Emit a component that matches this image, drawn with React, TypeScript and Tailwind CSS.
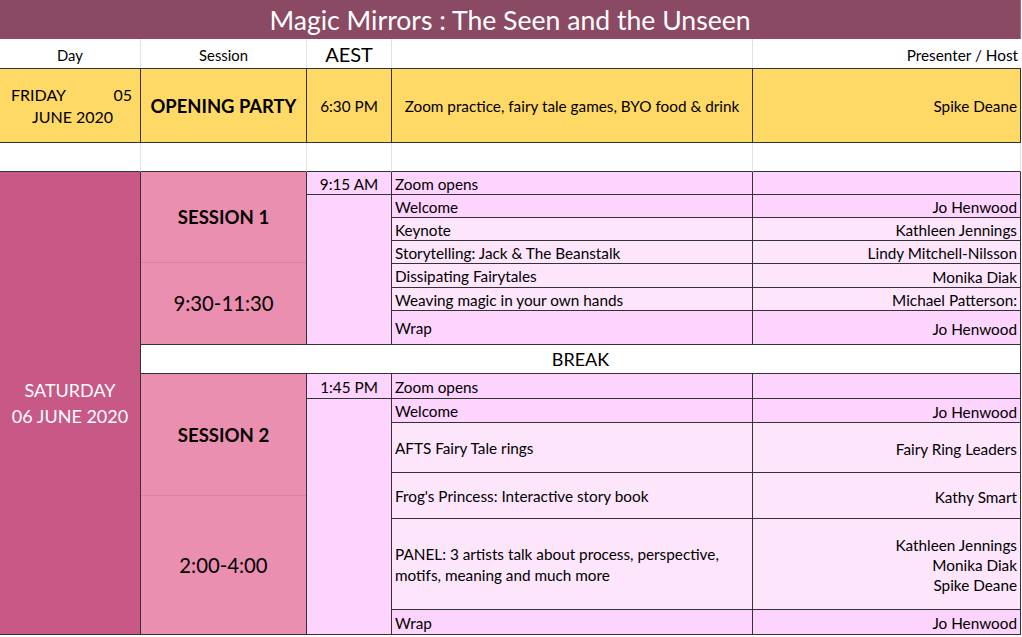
import React from "react";

const dark = "border-[#333]";
const light = "border-[#e2e2e2]";

type Item = { title: React.ReactNode; who: React.ReactNode; tone: "deep" | "soft" };

const session1: Item[] = [
  { title: "Zoom opens", who: "", tone: "deep" },
  { title: "Welcome", who: "Jo Henwood", tone: "deep" },
  { title: "Keynote", who: "Kathleen Jennings", tone: "soft" },
  { title: "Storytelling: Jack & The Beanstalk", who: "Lindy Mitchell-Nilsson", tone: "soft" },
  { title: "Dissipating Fairytales", who: "Monika Diak", tone: "soft" },
  { title: "Weaving magic in your own hands", who: "Michael Patterson:", tone: "soft" },
  { title: "Wrap", who: "Jo Henwood", tone: "deep" },
];

const session2: Item[] = [
  { title: "Zoom opens", who: "", tone: "deep" },
  { title: "Welcome", who: "Jo Henwood", tone: "deep" },
  { title: "AFTS Fairy Tale rings", who: "Fairy Ring Leaders", tone: "soft" },
  { title: "Frog's Princess: Interactive story book", who: "Kathy Smart", tone: "soft" },
  {
    title: (
      <>
        PANEL: 3 artists talk about process, perspective,
        <br />
        motifs, meaning and much more
      </>
    ),
    who: (
      <>
        Kathleen Jennings
        <br />
        Monika Diak
        <br />
        Spike Deane
      </>
    ),
    tone: "soft",
  },
  { title: "Wrap", who: "Jo Henwood", tone: "deep" },
];

// grid rows where each item of a session starts
const rows1 = ["row-start-5", "row-start-6", "row-start-7", "row-start-8", "row-start-9", "row-start-10", "row-start-11"];
const rows2 = ["row-start-13", "row-start-14", "row-start-15", "row-start-16", "row-start-17", "row-start-18"];

function ItemRows({ items, rows }: { items: Item[]; rows: string[] }) {
  return (
    <>
      {items.map((it, i) => {
        const bg = it.tone === "deep" ? "bg-[#fdd4fd]" : "bg-[#fde6fc]";
        return (
          <React.Fragment key={i}>
            <div className={`col-start-4 ${rows[i]} ${bg} border-r border-b ${dark} flex items-center pl-[3px] pt-[2px] leading-[21px]`}>
              <div>{it.title}</div>
            </div>
            <div className={`col-start-5 ${rows[i]} ${bg} border-r border-b ${dark} flex items-center justify-end pr-[3px] pt-[2px] text-right leading-[20px]`}>
              <div>{it.who}</div>
            </div>
          </React.Fragment>
        );
      })}
    </>
  );
}

export default function App() {
  return (
    <div
      className="w-[1022px] h-[637px] bg-white text-[15.3px] text-black overflow-hidden"
      style={{ fontFamily: "Lato, 'Open Sans', sans-serif" }}
    >
      <div className="grid w-[1021px] grid-cols-[141px_166px_85px_361px_268px] grid-rows-[39px_29px_75px_29px_23px_23px_23px_23px_24px_23px_34px_29px_25px_24px_50px_46px_91px_25px]">
        {/* Title */}
        <div className="col-span-5 bg-[#8b4a63] border-r border-[#a07080] flex items-center justify-center text-white text-[26.6px] pt-[2px]">
          Magic Mirrors : The Seen and the Unseen
        </div>

        {/* Header */}
        <div className={`border-r ${light} flex items-center justify-center text-[14.8px] pt-1`}>Day</div>
        <div className={`border-r ${light} flex items-center justify-center text-[14.8px] pt-1`}>Session</div>
        <div className={`border-r ${light} flex items-center justify-center text-[20px] pt-px`}>AEST</div>
        <div className={`border-r ${light}`}></div>
        <div className="flex items-center justify-end pr-[3px] text-[15.3px] pt-1">Presenter / Host</div>

        {/* Friday */}
        <div className={`bg-[#fed966] border-t border-r border-b ${dark} flex flex-col justify-center pl-[11px] pr-[8px] pt-px text-[16px] leading-[22px]`}>
          <div className="flex justify-between">
            <span>FRIDAY</span>
            <span>05</span>
          </div>
          <div className="text-center pl-[2px]">JUNE 2020</div>
        </div>
        <div className={`bg-[#fed966] border-t border-r border-b ${dark} flex items-center justify-center font-bold text-[18.4px] pt-[2px]`}>
          OPENING PARTY
        </div>
        <div className={`bg-[#fed966] border-t border-r border-b ${dark} flex items-center justify-center pt-[2px]`}>6:30 PM</div>
        <div className={`bg-[#fed966] border-t border-r border-b ${dark} flex items-center justify-center pt-[2px]`}>
          Zoom practice, fairy tale games, BYO food &amp; drink
        </div>
        <div className={`bg-[#fed966] border-t border-r border-b ${dark} flex items-center justify-end pr-[3px] pt-[2px]`}>
          Spike Deane
        </div>

        {/* Blank spacer row */}
        <div className={`border-r ${light} border-b border-b-[#333]`}></div>
        <div className={`border-r ${light} border-b border-b-[#333]`}></div>
        <div className={`border-r ${light} border-b border-b-[#333]`}></div>
        <div className={`border-r ${light} border-b border-b-[#333]`}></div>
        <div className="border-r border-[#e2e2e2] border-b border-b-[#333]"></div>

        {/* Saturday */}
        <div className={`col-start-1 row-start-5 row-span-14 bg-[#c85886] border-r border-b ${dark} flex flex-col items-center justify-center text-white text-[18px] leading-[26px]`}>
          <div>SATURDAY</div>
          <div>06 JUNE 2020</div>
        </div>

        {/* Session 1 */}
        <div className={`col-start-2 row-start-5 row-span-7 bg-[#eb8fb0] border-r border-b ${dark} flex flex-col`}>
          <div className="h-[91px] flex items-center justify-center font-bold text-[18.6px] pt-[2px] border-b border-[#dc7fa0]">SESSION 1</div>
          <div className="flex-1 flex items-center justify-center text-[20.3px]">9:30-11:30</div>
        </div>
        <div className={`col-start-3 row-start-5 bg-[#fdd4fd] border-r border-b ${dark} flex items-center justify-center pt-[2px]`}>9:15 AM</div>
        <div className={`col-start-3 row-start-6 row-span-6 bg-[#fdd4fd] border-r border-b ${dark}`}></div>
        <ItemRows items={session1} rows={rows1} />

        {/* Break */}
        <div className={`col-start-2 col-span-4 row-start-12 bg-white border-r border-b ${dark} flex items-center justify-center text-[18px] pt-px`}>
          BREAK
        </div>

        {/* Session 2 */}
        <div className={`col-start-2 row-start-13 row-span-6 bg-[#eb8fb0] border-r border-b ${dark} flex flex-col`}>
          <div className="h-[122px] flex items-center justify-center font-bold text-[18.6px] pt-[2px] border-b border-[#dc7fa0]">SESSION 2</div>
          <div className="flex-1 flex items-center justify-center text-[20.3px]">2:00-4:00</div>
        </div>
        <div className={`col-start-3 row-start-13 bg-[#fdd4fd] border-r border-b ${dark} flex items-center justify-center pt-[2px]`}>1:45 PM</div>
        <div className={`col-start-3 row-start-14 row-span-5 bg-[#fdd4fd] border-r border-b ${dark}`}></div>
        <ItemRows items={session2} rows={rows2} />
      </div>
    </div>
  );
}
